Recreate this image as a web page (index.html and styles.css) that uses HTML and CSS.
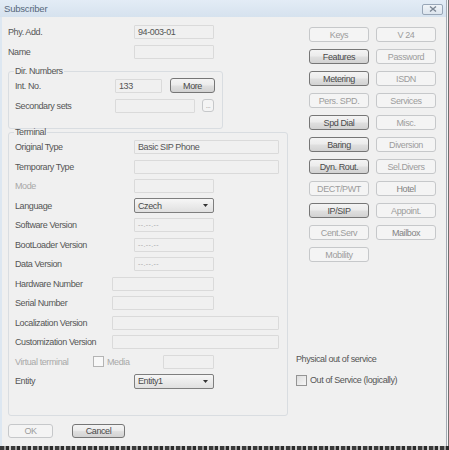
FILE: index.html
```html
<!DOCTYPE html>
<html lang="en">
<head>
    <meta charset="UTF-8">
    <title>Subscriber</title>
    <link rel="stylesheet" href="styles.css">
</head>
<body>
    <div class="screen">
        <div class="top">
            <div class="window">
                <div class="titlebar">
                    <span class="title">Subscriber</span>
                    <span class="close">
                        <svg width="8" height="6" viewBox="0 0 8 6">
                            <path d="M1 0.5 L7 5.5 M7 0.5 L1 5.5" stroke="#7c8795" stroke-width="1.4" fill="none"/>
                        </svg>
                    </span>
                </div>

                <div class="body">
                    <div class="content">
                        <div class="left">
                            <div class="row plain">
                                <span class="lbl">Phy. Add.</span>
                                <span class="field w80">94-003-01</span>
                            </div>
                            <div class="row plain">
                                <span class="lbl">Name</span>
                                <span class="field w80"></span>
                            </div>

                            <fieldset class="group dir">
                                <legend>Dir. Numbers</legend>
                                <div class="row">
                                    <span class="lbl">Int. No.</span>
                                    <span class="field w47">133</span>
                                    <span class="btn more">More</span>
                                </div>
                                <div class="row">
                                    <span class="lbl">Secondary sets</span>
                                    <span class="field w80"></span>
                                    <span class="btn dots disabled">...</span>
                                </div>
                            </fieldset>

                            <fieldset class="group terminal">
                                <legend>Terminal</legend>
                                <div class="row">
                                    <span class="lbl">Original Type</span>
                                    <span class="field w145">Basic SIP Phone</span>
                                </div>
                                <div class="row">
                                    <span class="lbl">Temporary Type</span>
                                    <span class="field w145"></span>
                                </div>
                                <div class="row">
                                    <span class="lbl off">Mode</span>
                                    <span class="field w80"></span>
                                </div>
                                <div class="row">
                                    <span class="lbl">Language</span>
                                    <span class="select">Czech
                                        <svg width="5" height="3" viewBox="0 0 5 3"><path d="M0 0 H5 L2.5 3 Z" fill="#333"/></svg>
                                    </span>
                                </div>
                                <div class="row">
                                    <span class="lbl">Software Version</span>
                                    <span class="field w80 dash">--.--.--</span>
                                </div>
                                <div class="row">
                                    <span class="lbl">BootLoader Version</span>
                                    <span class="field w80 dash">--.--.--</span>
                                </div>
                                <div class="row">
                                    <span class="lbl">Data Version</span>
                                    <span class="field w80 dash">--.--.--</span>
                                </div>
                                <div class="row narrow">
                                    <span class="lbl">Hardware Number</span>
                                    <span class="field w102"></span>
                                </div>
                                <div class="row narrow">
                                    <span class="lbl">Serial Number</span>
                                    <span class="field w102"></span>
                                </div>
                                <div class="row narrow">
                                    <span class="lbl">Localization Version</span>
                                    <span class="field w167"></span>
                                </div>
                                <div class="row narrow">
                                    <span class="lbl">Customization Version</span>
                                    <span class="field w167"></span>
                                </div>
                                <div class="row virtual">
                                    <span class="lbl off">Virtual terminal</span>
                                    <span class="check off"><span class="box"></span>Media</span>
                                    <span class="field w51"></span>
                                </div>
                                <div class="row">
                                    <span class="lbl">Entity</span>
                                    <span class="select">Entity1
                                        <svg width="5" height="3" viewBox="0 0 5 3"><path d="M0 0 H5 L2.5 3 Z" fill="#333"/></svg>
                                    </span>
                                </div>
                            </fieldset>
                        </div>

                        <div class="right">
                            <div class="buttons">
                                <span class="btn disabled">Keys</span>
                                <span class="btn disabled">V 24</span>
                                <span class="btn">Features</span>
                                <span class="btn disabled">Password</span>
                                <span class="btn">Metering</span>
                                <span class="btn disabled">ISDN</span>
                                <span class="btn disabled">Pers. SPD.</span>
                                <span class="btn disabled">Services</span>
                                <span class="btn">Spd Dial</span>
                                <span class="btn disabled">Misc.</span>
                                <span class="btn">Baring</span>
                                <span class="btn disabled">Diversion</span>
                                <span class="btn">Dyn. Rout.</span>
                                <span class="btn disabled">Sel.Divers</span>
                                <span class="btn disabled">DECT/PWT</span>
                                <span class="btn disabled mid">Hotel</span>
                                <span class="btn">IP/SIP</span>
                                <span class="btn disabled">Appoint.</span>
                                <span class="btn disabled">Cent.Serv</span>
                                <span class="btn disabled mid">Mailbox</span>
                                <span class="btn disabled">Mobility</span>
                            </div>
                            <div class="oos-title">Physical out of service</div>
                            <span class="check oos"><span class="box"></span>Out of Service (logically)</span>
                        </div>
                    </div>

                    <div class="footer">
                        <span class="btn disabled ok">OK</span>
                        <span class="btn cancel">Cancel</span>
                    </div>
                </div>
            </div>
            <div class="side"></div>
        </div>
        <div class="desk"></div>
    </div>
</body>
</html>
```

FILE: styles.css
```css
body {
    margin: 0;
    background: #fff;
    font-family: "Liberation Sans", Arial, sans-serif;
    font-size: 9px;
    letter-spacing: -0.4px;
    color: #555;
}
.screen {
    width: 449px;
    height: 450px;
    overflow: hidden;
    display: flex;
    flex-direction: column;
}
.top {
    display: flex;
    height: 446px;
}
.window {
    width: 447px;
    background: #f0f0f0;
    border-right: 1px solid #a3aab3;
    box-sizing: border-box;
    display: flex;
    flex-direction: column;
}
.side {
    width: 2px;
    background: linear-gradient(to right, #f6f6f6 1px, #707070 1px);
}
.desk {
    height: 4px;
    background: repeating-linear-gradient(to right, #3a3a3a 0 4px, #9a9a9a 4px 6px, #2a2a2a 6px 9px, #c8c8c8 9px 11px);
}

.titlebar {
    height: 17px;
    background: linear-gradient(#e3ecf6, #d6e2ee);
    display: flex;
    align-items: center;
    justify-content: space-between;
    padding: 0 3px 0 4px;
}
.title {
    font-size: 9.5px;
    letter-spacing: -0.2px;
    color: #56677b;
}
.close {
    width: 19px;
    height: 9px;
    border: 1px solid #98a6b7;
    border-radius: 2px;
    background: linear-gradient(#f0f4f8, #dde5ee);
    display: flex;
    align-items: center;
    justify-content: center;
    margin-top: 1px;
}

.body {
    flex: 1;
    border-left: 2px solid #dde7f1;
    padding: 8px 0 0 6px;
}
.content {
    display: flex;
}
.left {
    width: 280px;
}
.right {
    margin-left: 8px;
    display: flex;
    flex-direction: column;
}

.row {
    display: flex;
    align-items: center;
    height: 14px;
}
.row.plain {
    margin-bottom: 6px;
}
.lbl {
    width: 119px;
    flex: none;
    line-height: 12px;
    white-space: nowrap;
}
.lbl.off {
    color: #a8a8a8;
}
.plain .lbl {
    width: 126px;
}
.dir .lbl {
    width: 100px;
}
.narrow .lbl {
    width: 97px;
}
.virtual .lbl {
    width: 78px;
}

.field {
    height: 14px;
    box-sizing: border-box;
    border: 1px solid #dadada;
    border-radius: 1px;
    background: #f0f0f0;
    padding-left: 3px;
    line-height: 12px;
    white-space: nowrap;
}
.field.dash {
    color: #a8a8a8;
    font-size: 7px;
    letter-spacing: 0.4px;
}
.w47 { width: 47px; }
.w51 { width: 51px; }
.w80 { width: 80px; }
.w102 { width: 102px; }
.w145 { width: 145px; }
.w167 { width: 167px; }

.select {
    width: 80px;
    height: 15px;
    box-sizing: border-box;
    border: 1px solid #7e7e7e;
    border-radius: 2px;
    background: linear-gradient(#f6f6f6, #e0e0e0);
    display: flex;
    align-items: center;
    justify-content: space-between;
    padding: 0 5px 0 3px;
    color: #4a4a4a;
}

.group {
    margin: 0;
    padding: 2px 6px 15px;
    border: 1px solid #d9dde1;
    border-radius: 3px;
    min-width: 0;
}
.group legend {
    padding: 0 1px;
    margin-left: -1px;
    line-height: 10px;
}
.dir {
    width: 215px;
    box-sizing: border-box;
    margin-top: 7px;
}
.dir .row {
    height: 15px;
}
.dir .row + .row {
    margin-top: 5px;
}
.terminal {
    margin-top: -2px;
    padding: 3px 6px 27px;
    display: flex;
    flex-direction: column;
    gap: 5.5px;
}

.btn {
    box-sizing: border-box;
    height: 15px;
    border: 1px solid #767676;
    border-radius: 3px;
    background: linear-gradient(#f4f4f4 0%, #ececec 45%, #dfdfdf 55%, #d2d2d2 100%);
    display: flex;
    align-items: center;
    justify-content: center;
    color: #4a4a4a;
    white-space: nowrap;
}
.btn.disabled {
    border-color: #c6c8ca;
    background: #f4f4f4;
    color: #9c9c9c;
}
.btn.mid {
    color: #828282;
}
.more {
    width: 45px;
    margin-left: 8px;
}
.dots {
    width: 12px;
    height: 13px;
    margin-left: 7px;
    font-size: 7px;
    align-items: flex-end;
    padding-bottom: 2px;
}

.buttons {
    margin-top: 2px;
    margin-left: 13px;
    display: grid;
    grid-template-columns: 60px 60px;
    grid-auto-rows: 15px;
    gap: 7px;
}
.oos-title {
    margin-top: 91px;
    line-height: 12px;
}
.check {
    display: flex;
    align-items: center;
    line-height: 12px;
}
.check .box {
    width: 9px;
    height: 9px;
    border: 1px solid #949494;
    background: linear-gradient(135deg, #dedede, #f6f6f6);
    margin-right: 3px;
}
.check.off {
    color: #a8a8a8;
    width: 70px;
    flex: none;
}
.check.off .box {
    border-color: #b4b4b4;
    background: #f8f8f8;
}
.oos {
    margin-top: 9px;
}

.footer {
    margin-top: 8px;
    display: flex;
    gap: 19px;
}
.ok {
    width: 45px;
    height: 14px;
}
.cancel {
    width: 53px;
    height: 14px;
}
```
